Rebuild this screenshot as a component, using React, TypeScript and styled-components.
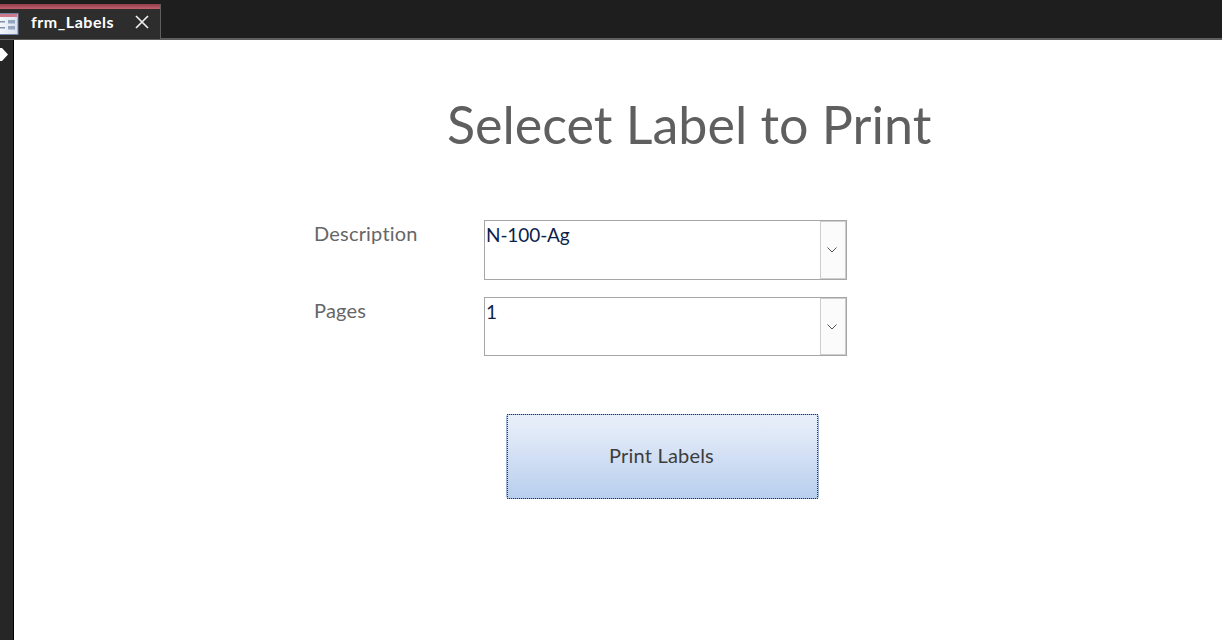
import React from "react";
import styled, { createGlobalStyle } from "styled-components";

const Global = createGlobalStyle`
  html, body { margin: 0; padding: 0; background: #fff; }
  body { font-family: "Lato", "Open Sans", sans-serif; overflow: hidden; }
`;
const Page = styled.div`
  width: 1222px; height: 640px; display: flex; flex-direction: column; overflow: hidden;
`;
const TabBar = styled.div`
  height: 38px; box-sizing: content-box; flex: none; background: #1e1e1e;
  border-bottom: 2px solid #5f5f5f; display: flex; align-items: flex-end;
`;
const Tab = styled.div`
  width: 161px; height: 35px; box-sizing: border-box; background: #2d2d2d;
  border-right: 1px solid #5f5f5f; margin-bottom: -1px;
  display: flex; flex-direction: column; color: #fff;
`;
const TabAccent = styled.div`
  height: 5px; flex: none; background: linear-gradient(180deg, #8f3f4b 0%, #c4606d 100%);
`;
const TabContent = styled.div`
  flex: 1; display: flex; align-items: center; padding-bottom: 4px;
`;
const TabIcon = styled.svg`
  width: 19px; height: 22px; flex: none; display: block; margin-top: 3px;
`;
const TabTitle = styled.span`
  margin: 0 0 2px 12px; font-size: 16px; font-weight: 700; width: 85px; white-space: nowrap;
  letter-spacing: 0.55px;
`;
const CloseIcon = styled.svg`
  width: 14px; height: 14px; margin-left: 19px; flex: none;
`;
const Body = styled.div`
  flex: 1; display: flex; min-height: 0;
`;
const Rail = styled.div`
  width: 13px; flex: none; background: #262626; border-right: 1px solid #000; padding-top: 8px;
`;
const RailArrow = styled.svg`
  display: block; width: 8px; height: 13px;
`;
const Form = styled.div`
  flex: 1; background: #fff; display: flex; flex-direction: column; align-items: flex-start;
  padding: 55px 0 0 300px;
`;
const Title = styled.h1`
  margin: 0 0 0 133px; font-size: 52px; line-height: 58px; font-weight: 400; color: #5f5f5f;
  white-space: nowrap;
`;
const Row = styled.div<{ $top: number; $h: number }>`
  display: flex; margin-top: ${p => p.$top}px; height: ${p => p.$h}px;
`;
const Label = styled.div`
  width: 170px; font-size: 20px; line-height: 26px; color: #666; letter-spacing: 0.2px;
`;
const Combo = styled.div`
  width: 363px; box-sizing: border-box; border: 1px solid #a6a6a6; display: flex;
`;
const ComboValue = styled.div`
  flex: 1; padding: 1px 0 0 1px; font-size: 19px; line-height: 26px; color: #0d1f4d;
  letter-spacing: -0.1px;
`;
const ComboButton = styled.div`
  width: 26px; flex: none; box-sizing: border-box; background: #fbfbfb; border: 1px solid #cdcdcd;
  display: flex; align-items: center; justify-content: center; padding-right: 2px;
`;
const Chevron = styled.svg`
  width: 10px; height: 6px; display: block;
`;
const PrintButton = styled.button`
  position: relative; display: block; margin: 58px 0 0 192px; width: 313px; height: 85px; box-sizing: border-box;
  border: 1px solid #9fb3d2; border-radius: 3px;
  background: linear-gradient(180deg, #e9f0fa 0%, #dfe8f7 25%, #b8cfee 100%);
  font-family: inherit; font-size: 20px; color: #3d3d3d; padding: 0 2px 4px 0; letter-spacing: 0.2px;
  &::after {
    content: ""; position: absolute; inset: -1px 0; border: 1px dotted #1f3560; pointer-events: none;
  }
`;

const ChevronGlyph = () => (
  <Chevron viewBox="0 0 10 6"><path d="M0.5 0.5 L5 5 L9.5 0.5" fill="none" stroke="#555" strokeWidth="1" /></Chevron>
);

export default function App() {
  return (
    <Page>
      <Global />
      <TabBar>
        <Tab>
          <TabAccent />
          <TabContent>
            <TabIcon viewBox="0 0 19 22">
              <defs>
                <linearGradient id="formFace" x1="0" y1="0" x2="1" y2="0">
                  <stop offset="0" stopColor="#f7f9fd" />
                  <stop offset="1" stopColor="#d9e0ee" />
                </linearGradient>
              </defs>
              <rect x="-2" y="0.5" width="20" height="21" fill="url(#formFace)" stroke="#6f82a8" />
              <rect x="-1" y="1" width="18" height="3" fill="#cf7a8c" />
              <rect x="-1" y="8" width="6" height="1.5" fill="#7f90ad" />
              <rect x="8" y="7" width="7" height="3.5" fill="#94a5c0" />
              <rect x="-1" y="14" width="6" height="1.5" fill="#7f90ad" />
              <rect x="8" y="13" width="7" height="3.5" fill="#94a5c0" />
            </TabIcon>
            <TabTitle>frm_Labels</TabTitle>
            <CloseIcon viewBox="0 0 14 14"><path d="M1 1 L13 13 M13 1 L1 13" stroke="#eeeeee" strokeWidth="1.7" fill="none" /></CloseIcon>
          </TabContent>
        </Tab>
      </TabBar>
      <Body>
        <Rail>
          <RailArrow viewBox="0 0 8 13"><path d="M0 0 H2 L8 6.5 L2 13 H0 Z" fill="#fff" /></RailArrow>
        </Rail>
        <Form>
          <Title>Selecet Label to Print</Title>
          <Row $top={67} $h={60}>
            <Label>Description</Label>
            <Combo>
              <ComboValue>N-100-Ag</ComboValue>
              <ComboButton><ChevronGlyph /></ComboButton>
            </Combo>
          </Row>
          <Row $top={17} $h={59}>
            <Label>Pages</Label>
            <Combo>
              <ComboValue>1</ComboValue>
              <ComboButton><ChevronGlyph /></ComboButton>
            </Combo>
          </Row>
          <PrintButton>Print Labels</PrintButton>
        </Form>
      </Body>
    </Page>
  );
}
